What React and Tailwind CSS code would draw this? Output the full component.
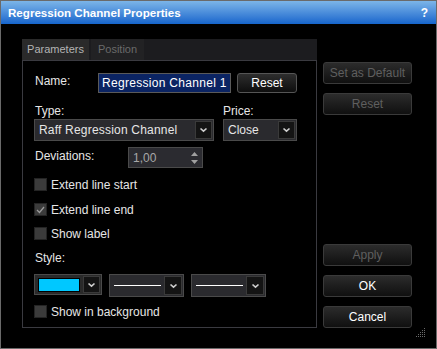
import React from "react";

function Chevron() {
  return (
    <svg width="9" height="6" viewBox="0 0 9 6" className="block">
      <path d="M1.5 1.5 L4.5 4.2 L7.5 1.5" fill="none" stroke="#cfcfcf" strokeWidth="1.6" />
    </svg>
  );
}

function ArrowBtn({ w = "w-[17px]" }) {
  return (
    <div className={`${w} self-stretch m-[1px] bg-[#141414] border border-[#3a3a3a] flex items-center justify-center`}>
      <Chevron />
    </div>
  );
}

function Checkbox({ checked }) {
  return (
    <div className="w-[13px] h-[13px] bg-[#3b3b3b] border border-[#242424] flex items-center justify-center">
      {checked && (
        <svg width="9" height="8" viewBox="0 0 9 8">
          <path d="M1 4 L3.5 6.5 L8 1" fill="none" stroke="#9a9a9a" strokeWidth="1.3" />
        </svg>
      )}
    </div>
  );
}

function Btn({ children, disabled, cls = "" }) {
  return (
    <div
      className={`h-[22px] w-[89px] rounded-[3px] border border-[#3a3a3a] bg-linear-to-b from-[#2c2c2c] to-[#101010] flex items-center justify-center text-[12px] ${
        disabled ? "text-[#5f5f5f]" : "text-white"
      } ${cls}`}
    >
      {children}
    </div>
  );
}

export default function App() {
  return (
    <div className="w-[437px] h-[349px] bg-black border border-[#6a6a6a] flex flex-col relative font-['Liberation_Sans',Arial,sans-serif] text-[12px] text-[#e6e6e6] overflow-hidden">
      <div className="h-[23px] bg-linear-to-b from-[#7cb5e8] to-[#1565cc] flex items-center justify-between pl-[7px] pr-[8px] text-white font-bold text-[11.6px] shrink-0">
        <span>Regression Channel Properties</span>
        <span className="text-[12px]">?</span>
      </div>
      <div className="flex pl-[21px] pt-[15px]">
        {/* Panel */}
        <div className="w-[295px] h-[289px] flex flex-col">
          <div className="h-[21px] bg-[#1c1c1f] flex shrink-0">
            <div className="w-[67px] bg-[#2a2a2a] text-[#b4b4b4] text-[11px] flex items-center justify-center">Parameters</div>
            <div className="w-[53px] ml-[2px] bg-[#222224] text-[#6a6a6a] text-[11px] flex items-center justify-center">Position</div>
          </div>
          <div className="flex-1 border border-[#3a3a40] pl-[11px] flex flex-col">
            {/* Name row */}
            <div className="flex items-center h-[20px] mt-[12px]">
              <div className="w-[64px] pl-[1px] -mt-[4px]">Name:</div>
              <div className="w-[133px] h-[20px] border border-[#5a5a5a] bg-[#0b2463] text-white flex items-center pl-[3px] tracking-[0.3px]">Regression Channel 1</div>
              <div className="ml-[6px] w-[60px] h-[20px] rounded-[3px] border border-[#555] bg-linear-to-b from-[#2e2e2e] to-[#0e0e0e] text-white flex items-center justify-center">Reset</div>
            </div>
            {/* Type / Price labels */}
            <div className="flex h-[14px] mt-[11px] items-center">
              <div className="w-[189px] pl-[1px]">Type:</div>
              <div>Price:</div>
            </div>
            {/* Selects */}
            <div className="flex h-[22px] mt-[1px]">
              <div className="w-[180px] h-[22px] border border-[#4a4a4a] bg-[#2a2a2e] flex items-center">
                <span className="flex-1 pl-[4px] tracking-[0.2px]">Raff Regression Channel</span>
                <ArrowBtn />
              </div>
              <div className="ml-[9px] w-[74px] h-[22px] border border-[#4a4a4a] bg-[#2a2a2e] flex items-center">
                <span className="flex-1 pl-[4px]">Close</span>
                <ArrowBtn />
              </div>
            </div>
            {/* Deviations */}
            <div className="flex h-[21px] mt-[6px] items-center">
              <div className="w-[94px] pl-[1px] -mt-[4px]">Deviations:</div>
              <div className="w-[75px] h-[21px] border border-[#4a4a4a] bg-[#2b2b30] flex items-center">
                <span className="flex-1 pl-[4px] text-[#a8a8a8]">1,00</span>
                <div className="w-[12px] flex flex-col items-center justify-center gap-[4px] mr-[2px]">
                  <svg width="7" height="4" viewBox="0 0 7 4"><path d="M0 4 L3.5 0 L7 4Z" fill="#a0a0a0" /></svg>
                  <svg width="7" height="4" viewBox="0 0 7 4"><path d="M0 0 L3.5 4 L7 0Z" fill="#a0a0a0" /></svg>
                </div>
              </div>
            </div>
            {/* Checkboxes */}
            <div className="flex items-center h-[13px] mt-[10px]">
              <Checkbox />
              <span className="ml-[4px]">Extend line start</span>
            </div>
            <div className="flex items-center h-[13px] mt-[12px]">
              <Checkbox checked />
              <span className="ml-[4px]">Extend line end</span>
            </div>
            <div className="flex items-center h-[13px] mt-[11px]">
              <Checkbox />
              <span className="ml-[4px]">Show label</span>
            </div>
            {/* Style label */}
            <div className="h-[14px] mt-[11px] pl-[1px] flex items-center">Style:</div>
            {/* Style row */}
            <div className="flex items-start mt-[9px]">
              <div className="w-[68px] h-[21px] border border-[#4a4a4a] bg-[#2a2a2a] flex items-center">
                <div className="ml-[3px] w-[42px] h-[14px] border border-black bg-[#00c8ff]" />
                <div className="flex-1" />
                <ArrowBtn />
              </div>
              <div className="ml-[7px] w-[75px] h-[23px] border border-[#4a4a4a] bg-[#2a2a2e] flex items-center">
                <div className="ml-[4px] w-[47px] h-px bg-white" />
                <div className="flex-1" />
                <ArrowBtn w="w-[18px]" />
              </div>
              <div className="ml-[7px] w-[75px] h-[23px] border border-[#4a4a4a] bg-[#2a2a2e] flex items-center">
                <div className="ml-[4px] w-[47px] h-px bg-white" />
                <div className="flex-1" />
                <ArrowBtn w="w-[18px]" />
              </div>
            </div>
            <div className="flex items-center h-[13px] mt-[8px]">
              <Checkbox />
              <span className="ml-[4px]">Show in background</span>
            </div>
          </div>
        </div>
        {/* Right column */}
        <div className="ml-[6px] h-[289px] flex flex-col justify-between">
          <div className="flex flex-col gap-[9px] mt-[23px]">
            <Btn disabled>Set as Default</Btn>
            <Btn disabled>Reset</Btn>
          </div>
          <div className="flex flex-col gap-[9px]">
            <Btn disabled>Apply</Btn>
            <Btn>OK</Btn>
            <Btn>Cancel</Btn>
          </div>
        </div>
      </div>
      <svg className="absolute right-[10px] bottom-[10px]" width="10" height="10" viewBox="0 0 10 10">
        {[[8, 0], [6, 2], [8, 2], [4, 4], [6, 4], [8, 4], [2, 6], [4, 6], [6, 6], [8, 6], [0, 8], [2, 8], [4, 8], [6, 8], [8, 8]].map(([x, y], i) => (
          <rect key={i} x={x} y={y} width="1" height="1" fill="#6a6a6a" />
        ))}
      </svg>
    </div>
  );
}
